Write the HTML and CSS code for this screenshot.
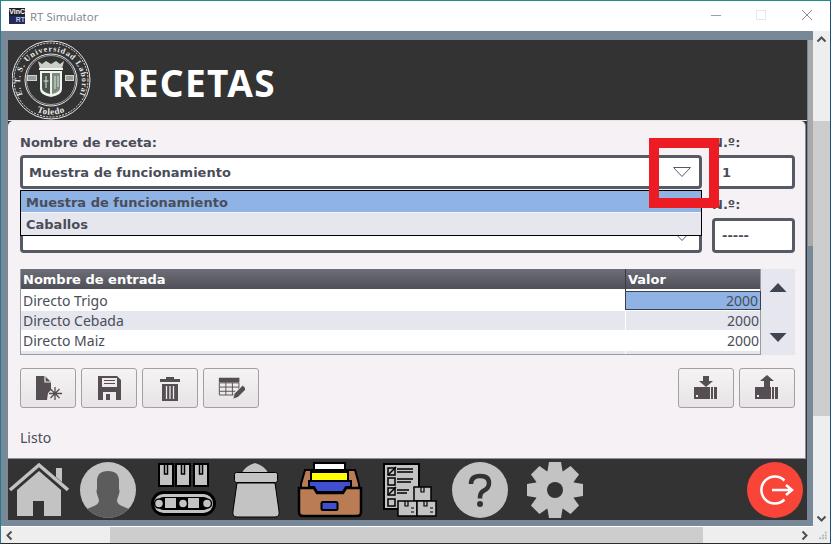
FILE: index.html
```html
<!DOCTYPE html>
<html lang="es">
<head>
<meta charset="utf-8">
<title>RT Simulator</title>
<link rel="stylesheet" href="styles.css">
</head>
<body>
<div class="window">
  <header class="titlebar">
    <div class="app-icon"><span class="app-top">VinC</span><span class="app-bottom">RT</span></div>
    <span class="app-title">RT Simulator</span>
    <div class="win-controls">
      <svg class="win-btn" viewBox="0 0 46 30"><path d="M19 14.500h10" stroke="#a0a0a0" stroke-width="1"/></svg>
      <svg class="win-btn" viewBox="0 0 46 30"><rect x="18.500" y="9.500" width="9" height="9" fill="none" stroke="#e8e8e8"/></svg>
      <svg class="win-btn" viewBox="0 0 46 30"><path d="M18 9l10 10M28 9l-10 10" stroke="#8c8c8c" fill="none"/></svg>
    </div>
  </header>
  <div class="client">
    <div class="viewport">
      <main class="stage">
        <div class="banner">
          <svg class="seal" viewBox="12 41 80 80">
            <defs>
              <path id="sealTop" d="M27 103a31 31 0 1 1 48 0"/>
              <path id="sealBottom" d="M24 103a35 35 0 0 0 54 0"/>
            </defs>
            <g fill="none" stroke="#e6e6e6">
              <circle cx="51" cy="81" r="39" stroke-width="1"/>
              <circle cx="51" cy="81" r="37" stroke-width="1" stroke-dasharray="2 1.200"/>
              <circle cx="51" cy="81" r="26" stroke-width="1"/>
              <circle cx="51" cy="81" r="24.500" stroke-width=".6"/>
            </g>
            <text class="seal-text"><textPath href="#sealTop" startOffset="50%" text-anchor="middle">E. T. S. Universidad Laboral</textPath></text>
            <text class="seal-text seal-bottom"><textPath href="#sealBottom" startOffset="50%" text-anchor="middle">Toledo</textPath></text>
            <path d="M38 62l4 3 4-3 5 3 5-3 4 3 4-3-2 8H40z" fill="#c8d0c8"/>
            <rect x="39" y="69" width="24" height="2" fill="#f2f2f2"/>
            <path d="M40 72h22v18q0 6-11 8-11-2-11-8z" fill="#f0f4f0"/>
            <path d="M42 74h8v21q-8-2-8-6z" fill="#4a564a"/>
            <path d="M52 74h8v15q0 4-8 6z" fill="#7d8b7d"/>
            <path d="M46 77v12M43.500 82h5M55 77v13M58 77v11" stroke="#dfe6df"/>
            <rect x="27" y="76" width="10" height="6" fill="#cfd6cf"/>
            <rect x="65" y="76" width="9" height="6" fill="#cfd6cf"/>
            <path d="M28 78h8M28 80h8M66 78h7M66 80h7" stroke="#333" stroke-width=".7"/>
          </svg>
          <h1 class="page-title">RECETAS</h1>
        </div>

        <section class="panel">
          <div class="field-grid">
            <div class="field-label">Nombre de receta:</div>
            <div class="field-label">N.º:</div>
            <div class="combo">
              <span>Muestra de funcionamiento</span>
              <svg class="combo-arrow" viewBox="0 0 18 10"><path d="M.500.500h17L9 9.500z" fill="none" stroke="#555a64"/></svg>
            </div>
            <div class="number-box">1</div>
            <div class="field-label lower">&nbsp;</div>
            <div class="field-label lower">N.º:</div>
            <div class="combo">
              <span></span>
              <svg class="combo-arrow" viewBox="0 0 18 10"><path d="M.500.500h17L9 9.500z" fill="none" stroke="#555a64"/></svg>
            </div>
            <div class="number-box">-----</div>
          </div>

          <div class="table-row">
            <div class="data-table">
              <div class="thead"><div class="th">Nombre de entrada</div><div class="th">Valor</div></div>
              <div class="tr first"><div class="td">Directo Trigo</div><div class="td num selected">2000</div></div>
              <div class="tr alt second"><div class="td">Directo Cebada</div><div class="td num">2000</div></div>
              <div class="tr third"><div class="td">Directo Maiz</div><div class="td num">2000</div></div>
              <div class="tr alt stub"><div class="td"></div><div class="td"></div></div>
            </div>
            <div class="table-nav">
              <svg class="tri" viewBox="0 0 18 9"><path d="M9 0l8.500 9H.500z" fill="#3e4450"/></svg>
              <svg class="tri" viewBox="0 0 18 9"><path d="M.500 0h17L9 9z" fill="#3e4450"/></svg>
            </div>
          </div>

          <div class="toolbar">
            <div class="tool-group">
              <button class="tool">
                <svg viewBox="0 0 28 28"><path d="M2 2h9l6 6v8l-3 3-1 7H2z" fill="#554e52"/><path d="M11 2v6h6" fill="none" stroke="#f2eef0" stroke-width="1.200"/><path d="M21 13v13M15 19.500h13M16.500 15l9 9M25.500 15l-9 9" stroke="#554e52" stroke-width="1.300"/></svg>
              </button>
              <button class="tool">
                <svg viewBox="0 0 28 28"><path d="M3 2h19l4 4v20H3z" fill="#554e52"/><rect x="7" y="4" width="15" height="9" fill="#efebed"/><path d="M9 6.500h11M9 9.500h11" stroke="#554e52"/><rect x="8" y="18" width="13" height="8" fill="#efebed"/><rect x="11" y="20" width="4" height="6" fill="#554e52"/></svg>
              </button>
              <button class="tool">
                <svg viewBox="0 0 28 28"><path d="M4 5h20v3H4zM10 5V3h8v2" fill="#554e52"/><path d="M6 10h16v17H6z" fill="#554e52"/><path d="M10.500 12v13M14 12v13M17.500 12v13" stroke="#efebed" stroke-width="1.300"/></svg>
              </button>
              <button class="tool">
                <svg viewBox="0 0 30 28"><path d="M2 3h22v5H2z" fill="#554e52"/><path d="M2.500 8.500h21v13h-21zM2.500 13h21M2.500 17.500h17M9.500 8.500v13M16.500 8.500v13" fill="none" stroke="#554e52"/><path d="M17 26l1.500-6 9-9 4 4-9 9z" fill="#554e52" stroke="#efebed" stroke-width=".8"/></svg>
              </button>
            </div>
            <div class="tool-group">
              <button class="tool">
                <svg viewBox="0 0 26 28"><path d="M10 2h6v5h4l-7 6-7-6h4z" fill="#554e52"/><rect x="1" y="13" width="24" height="12" fill="#554e52"/><path d="M17.500 13v12M20.500 13v12M24.500 13v12" stroke="#efebed" stroke-width="1"/><rect x="3" y="21" width="2" height="2" fill="#efebed"/></svg>
              </button>
              <button class="tool">
                <svg viewBox="0 0 26 28"><path d="M13 1l7 6h-4v6h-6V7H6z" fill="#554e52"/><rect x="1" y="13" width="24" height="12" fill="#554e52"/><path d="M17.500 13v12M20.500 13v12M24.500 13v12" stroke="#efebed" stroke-width="1"/><rect x="3" y="21" width="2" height="2" fill="#efebed"/></svg>
              </button>
            </div>
          </div>

          <div class="status">Listo</div>

          <div class="combo-popup">
            <div class="popup-item active">Muestra de funcionamiento</div>
            <div class="popup-item">Caballos</div>
          </div>
          <div class="highlight-box"></div>
        </section>

        <nav class="dock">
          <svg class="dock-icon home" viewBox="8 463 61 56">
            <path d="M10 491l29-25 29 25" fill="none" stroke="#c3c3c3" stroke-width="3.500"/>
            <path d="M56 469h6v14l-6-5z" fill="#c3c3c3"/>
            <path d="M39 472l22 19v26H44v-15H33v15H17v-26z" fill="#c3c3c3"/>
          </svg>
          <svg class="dock-icon person" viewBox="80 461 56 56">
            <defs><clipPath id="pc"><circle cx="108" cy="489" r="28"/></clipPath></defs>
            <circle cx="108" cy="489" r="28" fill="#c3c3c3"/>
            <path clip-path="url(#pc)" d="M97 480q0-10 11-10t11 10v8q1 2 0 5l-2 6q0 4 5 6l14 6v8H80v-8l14-6q5-2 5-6l-2-6q-1-3 0-5z" fill="#5c5c5c"/>
          </svg>
          <svg class="dock-icon belt" viewBox="150 461 67 58">
            <g fill="#c3c3c3" stroke="#000" stroke-width="2">
              <rect x="159" y="464" width="14" height="22"/>
              <rect x="176" y="464" width="14" height="22"/>
              <rect x="194" y="464" width="14" height="22"/>
            </g>
            <path d="M164.500 465v9h3v-9M181.500 465v9h3v-9M199.500 465v9h3v-9" fill="none" stroke="#000" stroke-width="1.500"/>
            <rect x="151" y="491" width="65" height="25" rx="12.500" fill="#000"/>
            <rect x="154" y="494" width="59" height="19" rx="9.500" fill="#c3c3c3"/>
            <rect x="157" y="497" width="53" height="13" rx="6.500" fill="#000"/>
            <rect x="165" y="498" width="11" height="10" fill="#c3c3c3"/>
            <rect x="188" y="498" width="11" height="10" fill="#c3c3c3"/>
            <g fill="#c3c3c3" stroke="#000" stroke-width="1.500">
              <circle cx="159" cy="503.500" r="4.500"/><circle cx="183" cy="503.500" r="4.500"/><circle cx="207" cy="503.500" r="4.500"/>
            </g>
          </svg>
          <svg class="dock-icon sack" viewBox="230 461 50 58">
            <path d="M241 473q3-7 13-10 10 3 13 10z" fill="#c3c3c3"/>
            <rect x="233.500" y="472.500" width="43" height="10" rx="2" fill="#c3c3c3" stroke="#000"/>
            <path d="M236 483l-4 28q-1 6 4 6h38q5 0 4-6l-4-28z" fill="#c3c3c3" stroke="#000"/>
          </svg>
          <svg class="dock-icon drawer" viewBox="297 461 66 58">
            <rect x="314" y="463" width="31" height="10" fill="#fff" stroke="#000" stroke-width="2"/>
            <path d="M305 470l-4 14v4h58v-4l-4-14z" fill="#b97c55" stroke="#000" stroke-width="2"/>
            <rect x="311" y="472" width="37" height="10" fill="#ff0" stroke="#000" stroke-width="2"/>
            <path d="M309 481h42v6l-5 0-3 5H317l-3-5h-5z" fill="#3f4fd0" stroke="#000" stroke-width="2"/>
            <path d="M299 488h15l3 5h26l3-5h15v24q0 4-4 4H303q-4 0-4-4z" fill="#b97c55" stroke="#000" stroke-width="2.500"/>
            <rect x="321.500" y="502" width="16" height="8" rx="1.500" fill="#3f4fd0" stroke="#000" stroke-width="2"/>
          </svg>
          <svg class="dock-icon list" viewBox="381 461 57 58">
            <rect x="383" y="464" width="35" height="45" fill="#c3c3c3" stroke="#000" stroke-width="2"/>
            <g fill="none" stroke="#000" stroke-width="1.500">
              <rect x="387" y="468" width="7" height="7"/><rect x="387" y="478" width="7" height="7"/><rect x="387" y="488" width="7" height="7"/><rect x="387" y="499" width="7" height="7"/>
              <path d="M387 475l8-8M387 495l8-8"/>
              <path d="M396 469h16M396 472h16M396 479h16M396 482h14M396 490h12M396 493h10"/>
            </g>
            <g fill="#c3c3c3" stroke="#000" stroke-width="1.500">
              <rect x="413" y="487" width="17" height="14"/>
              <rect x="397" y="501" width="19" height="15"/>
              <rect x="416" y="501" width="19" height="15"/>
            </g>
            <path d="M420 487v5h3v-5M404 501v5h3v-5M423 501v5h3v-5M410 508h3M410 512h3M429 508h3M429 512h3" fill="none" stroke="#000" stroke-width="1.200"/>
          </svg>
          <svg class="dock-icon help" viewBox="452 461 56 56">
            <circle cx="480" cy="489" r="28" fill="#c3c3c3"/>
            <path d="M471 483q0-8 9-8 9 0 9 7 0 5-5 7.500-4 2-4 6.500v1.500" fill="none" stroke="#333" stroke-width="4.500"/>
            <circle cx="480" cy="503" r="3" fill="#333"/>
          </svg>
          <svg class="dock-icon gear" viewBox="527 461 56 56">
            <g fill="#c3c3c3">
              <circle cx="555" cy="489" r="20"/>
              <path d="M549 461h12l2 12h-16z"/>
              <path d="M549 461h12l2 12h-16z" transform="rotate(45 555 489)"/>
              <path d="M549 461h12l2 12h-16z" transform="rotate(90 555 489)"/>
              <path d="M549 461h12l2 12h-16z" transform="rotate(135 555 489)"/>
              <path d="M549 461h12l2 12h-16z" transform="rotate(180 555 489)"/>
              <path d="M549 461h12l2 12h-16z" transform="rotate(225 555 489)"/>
              <path d="M549 461h12l2 12h-16z" transform="rotate(270 555 489)"/>
              <path d="M549 461h12l2 12h-16z" transform="rotate(315 555 489)"/>
            </g>
            <circle cx="555" cy="489" r="8" fill="#333"/>
          </svg>
          <svg class="dock-icon logout" viewBox="747 461 56 56">
            <circle cx="775" cy="489" r="28" fill="#f94438"/>
            <path d="M784.500 479.500a13.500 13.500 0 1 0 0 19" fill="none" stroke="#fff" stroke-width="2.500"/>
            <path d="M772 489h19M786 484l6 5-6 5" fill="none" stroke="#fff" stroke-width="2.500"/>
          </svg>
        </nav>
      </main>
      <div class="side-strip"></div>
    </div>
    <div class="vscroll">
      <svg class="sb-arrow" viewBox="0 0 17 17"><path d="M4.500 10.500l4-4 4 4" fill="none" stroke="#505050" stroke-width="2"/></svg>
      <div class="vthumb"></div>
      <svg class="sb-arrow" viewBox="0 0 17 17"><path d="M4.500 6.500l4 4 4-4" fill="none" stroke="#505050" stroke-width="2"/></svg>
    </div>
  </div>
  <div class="hscroll">
    <svg class="sb-arrow" viewBox="0 0 17 17"><path d="M10.500 4.500l-4 4 4 4" fill="none" stroke="#505050" stroke-width="2"/></svg>
    <div class="hthumb"></div>
    <svg class="sb-arrow" viewBox="0 0 17 17"><path d="M6.500 4.500l4 4-4 4" fill="none" stroke="#505050" stroke-width="2"/></svg>
    <svg class="sb-corner" viewBox="0 0 17 17">
      <path d="M12 5h2v2h-2zM9 8h2v2H9zM12 8h2v2h-2zM6 11h2v2H6zM9 11h2v2H9zM12 11h2v2h-2z" fill="#b8b8b8"/>
    </svg>
  </div>
</div>
</body>
</html>
```
FILE: styles.css
```css
* { box-sizing: border-box; }
html, body { margin: 0; height: 100%; overflow: hidden; background: #fff; }
body { font-family: "Noto Sans", "DejaVu Sans", sans-serif; color: #4a4d58; }

.window {
  width: 831px; height: 544px; display: flex; flex-direction: column;
  border-top: 1px solid #1a8f8c;
  border-left: 1px solid #2b7a8c;
  border-right: 1px solid #1c4f78;
  border-bottom: 1px solid #2a2a34;
  position: relative;
}

.titlebar { height: 30px; flex: none; display: flex; align-items: center; background: #fff; padding-left: 8px; }
.app-icon { width: 16px; height: 16px; display: flex; flex-direction: column; font: bold 7px/8px "Liberation Sans", sans-serif; text-align: right; }
.app-top { background: #20202c; color: #fff; height: 8px; white-space: nowrap; }
.app-bottom { background: #222a55; color: #b9c6f0; height: 8px; }
.app-title { margin-left: 5px; font: 11.500px "Open Sans", sans-serif; color: #80828a; }
.win-controls { margin-left: auto; display: flex; }
.win-btn { width: 46px; height: 30px; }

.client { flex: 1; min-height: 0; display: flex; }
.viewport { flex: 1; min-width: 0; background: #778899; display: flex; align-items: flex-start; padding: 9px 0 0 7px; border-bottom: 1px solid #fff; }
.stage { width: 799px; height: 480px; flex: none; background: #333; display: flex; flex-direction: column; }
.side-strip { flex: 1; height: 206px; margin-left: 1px; background: #a9a9a9; }

.banner { height: 81px; flex: none; display: flex; align-items: center; border-bottom: 1px solid #e6e6e6; }
.seal { width: 80px; height: 80px; margin-left: 4px; flex: none; }
.seal-text { font: bold 8px "Liberation Serif", serif; fill: #eee; letter-spacing: .9px; }
.seal-bottom { font-size: 9px; letter-spacing: .6px; }
.page-title { margin: 4px 0 0 20px; font: bold 37px/1 "Noto Sans", sans-serif; letter-spacing: 1.400px; color: #fff; }

.panel {
  height: 338px; flex: none; margin-right: 1px; padding: 14px 11px 0 12px;
  background: #f5f1f5; border: 1px solid #8f8f9a; border-width: 0 1px 1px 0;
  border-radius: 5px 5px 0 0; position: relative;
}
.field-grid { display: grid; grid-template-columns: 682px 83px; column-gap: 10px; grid-template-rows: 20px 34px 29px 35px; }
.field-label { font: bold 13px/16px "DejaVu Sans", sans-serif; align-self: start; }
.field-label.lower { padding-top: 8px; line-height: 16px; }
.combo, .number-box { border: 3px solid #555a64; border-radius: 4px; background: #fff; font: bold 13px "DejaVu Sans", sans-serif; display: flex; align-items: center; }
.combo { padding: 0 8px 0 6px; justify-content: space-between; }
.combo-arrow { width: 18px; height: 10px; }
.number-box { padding-left: 7px; }

.table-row { display: flex; margin-top: 16px; width: 775px; height: 86px; }
.data-table { width: 741px; border: 1px solid #9a9aa4; border-top: 0; background: #fff; font-size: 14px; }
.thead { display: grid; grid-template-columns: 604px 136px; height: 20px; background: linear-gradient(#6e6e78, #4f4f58); }
.th { color: #fff; font: bold 13px/22px "DejaVu Sans", sans-serif; padding-left: 2px; }
.th + .th { border-left: 1px solid #3c3c44; }
.tr { display: grid; grid-template-columns: 604px 136px; }
.tr.first { height: 22px; }
.tr.second { height: 19px; }
.tr.third { height: 21px; }
.tr.alt { background: #e6e6ee; }
.tr.stub { height: 3px; }
.td { display: flex; align-items: center; padding: 0 2px; overflow: hidden; }
.td + .td { border-left: 1px solid #fff; }
.td.num { justify-content: flex-end; }
.td.selected { background: #8fb3e4; border: 1px solid #3a3f4a; margin-top: 2px; margin-bottom: 1px; }
.table-nav { width: 34px; background: #e6e6ee; display: flex; flex-direction: column; align-items: center; justify-content: space-between; padding: 14px 0 13px; }
.tri { width: 18px; height: 9px; }

.toolbar { display: flex; justify-content: space-between; width: 775px; margin-top: 13px; }
.tool-group { display: flex; gap: 5px; }
.tool { width: 56px; height: 40px; padding: 0; border: 1px solid #a3a0a3; border-radius: 3px; background: linear-gradient(#f5f3f4, #e8e4e6); display: flex; align-items: center; justify-content: center; }
.tool svg { width: 28px; height: 28px; }

.status { margin-top: 21px; font-size: 14px; line-height: 18px; }

.combo-popup { position: absolute; left: 12px; top: 69px; width: 682px; border: 1px solid #000; background: #e6e6ee; }
.popup-item { height: 22px; font: bold 13px/23px "DejaVu Sans", sans-serif; padding-left: 5px; }
.popup-item.active { background: #8fb3e4; height: 22px; border-bottom: 1px solid #f5f5f5; }
.highlight-box { position: absolute; left: 641px; top: 17px; width: 70px; height: 70px; border: 10px solid #ed1c24; }

.dock { flex: 1; display: grid; grid-template-columns: 72px 70px 81px 66px 85px 70px 75px 1fr auto; align-items: center; padding-right: 4px; }
.dock-icon { display: block; }
.home { width: 61px; height: 56px; }
.person, .help, .gear, .logout { width: 56px; height: 56px; }
.belt { width: 67px; height: 58px; }
.sack { width: 50px; height: 58px; }
.drawer { width: 66px; height: 58px; }
.list { width: 57px; height: 58px; }

.vscroll { width: 17px; flex: none; background: #eee; display: flex; flex-direction: column; }
.sb-arrow { width: 17px; height: 17px; flex: none; display: block; }
.vthumb { height: 295px; margin-top: 73px; background: #cdcdcd; margin-bottom: auto; }
.hscroll { height: 16px; flex: none; background: #eee; display: flex; }
.hthumb { width: 593px; margin-left: 92px; background: #cdcdcd; }
.hscroll .sb-arrow:nth-of-type(2) { margin-left: auto; }
.sb-corner { width: 17px; height: 16px; flex: none; }
```
